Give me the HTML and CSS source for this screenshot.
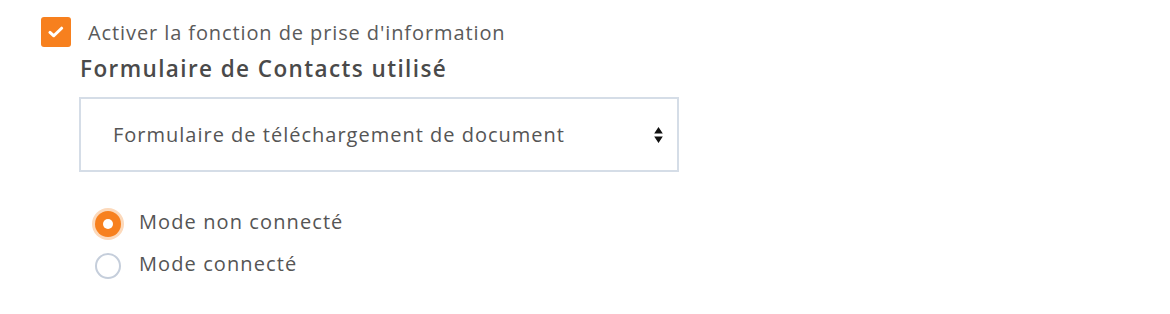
FILE: index.html
```html
<!DOCTYPE html>
<html lang="fr">
<head>
    <meta charset="UTF-8">
    <meta name="viewport" content="width=device-width, initial-scale=1.0">
    <title>Prise d'information</title>
    <link rel="stylesheet" href="styles.css">
</head>
<body>
    <div class="panel">
        <label class="check-row">
            <span class="checkbox checked">
                <svg width="16" height="12" viewBox="0 0 16 12"><path d="M2 6.4 L5.8 9.8 L13.6 2.2" fill="none" stroke="#fff" stroke-width="3" stroke-linecap="round" stroke-linejoin="round"/></svg>
            </span>
            <span class="check-text">Activer la fonction de prise d'information</span>
        </label>

        <div class="form-block">
            <h2 class="field-title">Formulaire de Contacts utilisé</h2>
            <div class="select-box">
                <span class="select-value">Formulaire de téléchargement de document</span>
                <svg class="select-arrows" width="9" height="18" viewBox="0 0 9 18"><path d="M4.5 1 L8.8 7.5 L0.2 7.5 Z M4.5 17 L8.8 10.5 L0.2 10.5 Z" fill="#111"/></svg>
            </div>

            <div class="radios">
                <label class="radio-row">
                    <span class="radio selected"></span>
                    <span class="radio-text">Mode non connecté</span>
                </label>
                <label class="radio-row">
                    <span class="radio"></span>
                    <span class="radio-text">Mode connecté</span>
                </label>
            </div>
        </div>
    </div>
</body>
</html>
```

FILE: styles.css
```css
body {
    margin: 0;
    background-color: #ffffff;
    font-family: 'Open Sans', 'Lato', sans-serif;
    color: #555555;
}

.panel {
    padding: 17px 0 0 41px;
}

.check-row {
    display: flex;
    align-items: center;
    gap: 17px;
    height: 30px;
}

.checkbox {
    width: 30px;
    height: 30px;
    border-radius: 3px;
    background-color: #f7801e;
    display: flex;
    align-items: center;
    justify-content: center;
}

.check-text {
    font-size: 20px;
    letter-spacing: 0.9px;
    color: #5a5a5a;
}

.form-block {
    margin-left: 38px;
}

.field-title {
    margin: 8px 0 0 1px;
    font-size: 22.5px;
    font-weight: 600;
    letter-spacing: 1.4px;
    color: #4a4a4a;
    line-height: 28px;
}

.select-box {
    margin-top: 14px;
    height: 71px;
    border: 2px solid #d5dde7;
    display: flex;
    align-items: center;
    justify-content: space-between;
    padding: 0 14px 0 32px;
    width: 550px;
}

.select-value {
    font-size: 20px;
    letter-spacing: 1px;
    color: #555555;
}

.radios {
    margin-top: 37px;
    margin-left: 14px;
    display: flex;
    flex-direction: column;
    gap: 12px;
}

.radio-row {
    display: flex;
    align-items: center;
    gap: 16px;
    height: 30px;
}

.radio {
    width: 26px;
    height: 26px;
    border-radius: 50%;
    border: 2px solid #c5cedb;
    box-sizing: border-box;
    margin: 2px;
}

.radio.selected {
    border: none;
    background-color: #f7801e;
    box-shadow: 0 0 0 3px #fcd9bb;
    position: relative;
}

.radio.selected::after {
    content: "";
    position: absolute;
    left: 8px;
    top: 8px;
    width: 10px;
    height: 10px;
    border-radius: 50%;
    background-color: #ffffff;
}

.radio-text {
    font-size: 20px;
    letter-spacing: 1.1px;
    color: #555555;
    margin-bottom: 5px;
}
```
